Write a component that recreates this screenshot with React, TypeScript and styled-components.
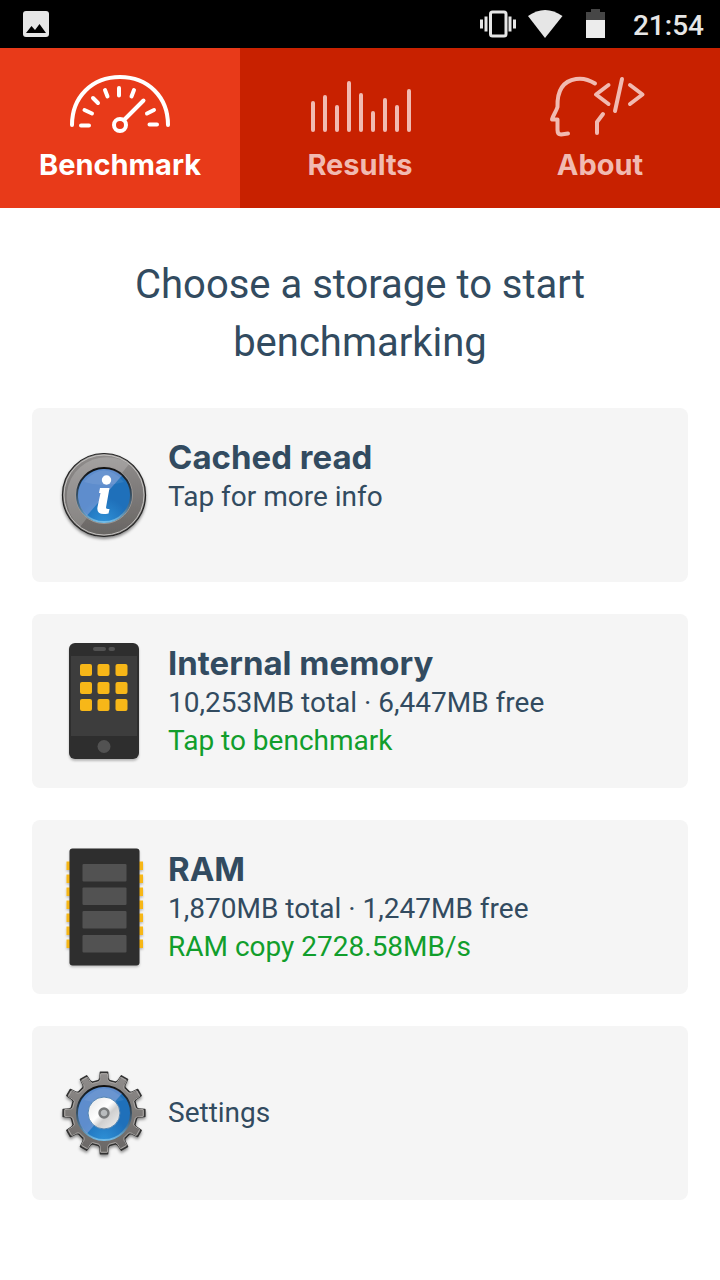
import React from "react";
import styled, { createGlobalStyle } from "styled-components";

const GlobalStyle = createGlobalStyle`
  * { box-sizing: border-box; }
  body { margin: 0; background: #fff; font-family: Roboto, "Liberation Sans", sans-serif; }
  svg { display: block; flex: none; }
`;

const Page = styled.div`
  min-height: 100vh;
  background: #fff;
  color: #324b60;
`;

const StatusBar = styled.header`
  display: flex;
  align-items: center;
  justify-content: space-between;
  height: 48px;
  padding: 0 16px 0 20px;
  background: #000;
  color: #e6e6e6;
`;

const StatusItems = styled.div`
  display: flex;
  align-items: center;
`;

const Clock = styled.time`
  margin-left: 24px;
  padding-top: 3px;
  font-size: 28px;
  line-height: 32px;
  font-weight: 500;
`;

const Tabs = styled.nav`
  display: grid;
  grid-template-columns: repeat(3, 1fr);
  background: #c82100;
`;

const Tab = styled.button<{ $active?: boolean }>`
  display: flex;
  flex-direction: column;
  align-items: center;
  height: 160px;
  padding: 24px 0 0;
  border: 0;
  background: ${(p) => (p.$active ? "#e83a19" : "#c82100")};
  color: ${(p) => (p.$active ? "#fff" : "#f1bab1")};
  font: 700 29px/36px Inter, "Open Sans", sans-serif;
  cursor: pointer;
`;

const TabIcon = styled.svg`
  width: 104px;
  height: 68px;
  margin-bottom: 7px;
  fill: none;
  stroke: currentColor;
  stroke-width: 4;
  stroke-linecap: round;
  stroke-linejoin: round;
`;

const Main = styled.main`
  padding: 48px 32px 80px;
`;

const Prompt = styled.h1`
  max-width: 520px;
  margin: 0 auto 36px;
  font-size: 40px;
  line-height: 58px;
  font-weight: 400;
  text-align: center;
`;

const CardList = styled.div`
  display: flex;
  flex-direction: column;
  gap: 32px;
`;

const Card = styled.button`
  display: flex;
  align-items: center;
  gap: 8px;
  width: 100%;
  min-height: 174px;
  padding: 16px;
  border: 0;
  border-radius: 8px;
  background: #f5f5f5;
  color: inherit;
  font: 400 28px/38px Roboto, "Liberation Sans", sans-serif;
  text-align: left;
  cursor: pointer;
`;

const CardIcon = styled.svg`
  width: 112px;
  height: 128px;
`;

const CardText = styled.span<{ $center?: boolean }>`
  display: flex;
  flex-direction: column;
  justify-content: ${(p) => (p.$center ? "center" : "flex-start")};
  min-height: 118px;
`;

const CardTitle = styled.span`
  font: 700 33px/42px Inter, "Open Sans", sans-serif;
`;

const Action = styled.span`
  color: #119e2c;
`;

const GaugeIcon = () => (
  <TabIcon viewBox="68 72 104 68" aria-hidden="true">
    <path d="M72 125C72 97 92 77 120 77S168 97 168 125" />
    <path d="M81 125.500H89M84.500 110 92 113.500M93 98 98 103M105 90 107.500 96.500M119 88V95.500M134 90 131.500 96.500M154 110 147 113.500M149.500 124.500H157M124 120 143.500 100.500" />
    <circle cx="120" cy="125" r="6" />
  </TabIcon>
);

const BarsIcon = () => (
  <TabIcon viewBox="308 72 104 68" aria-hidden="true">
    <path d="M313 103V130M325 97V130M337 107V130M349 83V130M361 95V130M373 113V130M385 100V130M397 107V130M409 91V130" />
  </TabIcon>
);

const HeadIcon = () => (
  <TabIcon viewBox="548 72 104 68" aria-hidden="true">
    <path d="M595 83.500C588 79 582 78 576 79C563 81 557 91 557.500 107C556 112 553 115 552 119.500H557.500V130Q557.500 134.500 561 134.500L568 133.500" />
    <path d="M608.500 85 596 94.500 608.500 104M622 79 615 111M630 85 642.500 94.500 630 104M603 114 597 122V133" />
  </TabIcon>
);

const PictureIcon = () => (
  <svg width="32" height="32" viewBox="20 8 32 32" aria-hidden="true">
    <rect x="23" y="11" width="26" height="26" rx="3" fill="#e6e6e6" />
    <path d="M26 33 31.500 26 35 30 39.500 24 46 33Z" fill="#000" />
  </svg>
);

const SystemIcons = () => (
  <svg width="130" height="32" viewBox="479 8 130 32" aria-hidden="true">
    <rect x="490.500" y="12" width="15.500" height="24" rx="2" fill="none" stroke="#e6e6e6" strokeWidth="3" />
    <path d="M480 19.500h3v9h-3zM484.500 16.500h3v15h-3zM508.500 16.500h3v15h-3zM513 19.500h3v9h-3z" fill="#e6e6e6" />
    <path d="M528 16Q545 4 562.500 16L545 38Z" fill="#e6e6e6" />
    <path d="M586 12h5V9h9v3h5v8h-19z" fill="#464646" />
    <path d="M586 20h19v18h-19z" fill="#ececec" />
  </svg>
);

const Gradients = ({ id }: { id: string }) => (
  <defs>
    <linearGradient id={`${id}-metal`} x1="0" y1="0" x2="0" y2="1">
      <stop offset="0" stopColor="#918e8d" />
      <stop offset="1" stopColor="#686563" />
    </linearGradient>
    <linearGradient id={`${id}-rim`} x1="0" y1="0" x2="0" y2="1">
      <stop offset="0" stopColor="#101010" />
      <stop offset=".3" stopColor="#24303c" />
      <stop offset=".75" stopColor="#4d7898" />
      <stop offset="1" stopColor="#71bdea" />
    </linearGradient>
    <radialGradient id={`${id}-blue`} cx=".5" cy="1" r=".45">
      <stop offset="0" stopColor="#2e90d6" />
      <stop offset="1" stopColor="#1f70ba" />
    </radialGradient>
    <filter id={`${id}-shadow`} x="-20%" y="-20%" width="140%" height="150%">
      <feDropShadow dx="0" dy="2" stdDeviation="1.600" floodColor="#000" floodOpacity=".45" />
    </filter>
  </defs>
);

const BlueLens = ({ id }: { id: string }) => (
  <>
    <circle r="27" fill={`url(#${id}-blue)`} stroke={`url(#${id}-rim)`} strokeWidth="2" />
    <path d="M18-19.500A26.500 26.500 0 0 0-17 20.500Z" fill="#b5b5e8" fillOpacity=".42" />
    <path d="M-20-13Q0-36 20-13Q0-7-20-13Z" fill="#fff" fillOpacity=".08" />
  </>
);

const InfoIcon = () => (
  <CardIcon viewBox="-56 -64 112 128" aria-hidden="true">
    <Gradients id="info" />
    <circle r="41.500" fill="url(#info-metal)" stroke="#242424" strokeWidth="1.200" filter="url(#info-shadow)" />
    <circle r="40" fill="none" stroke="#c4c2c0" strokeWidth="1" />
    <path d="M25-31A40 40 0 0 0-24 32Z" fill="#fff" fillOpacity=".18" />
    <circle r="28.500" fill="none" stroke="#9b9896" strokeWidth="1" />
    <BlueLens id="info" />
    <circle cx="2.500" cy="-15" r="4.700" fill="#fff" />
    <path d="M-4-7H5.500L2 12.500Q2 14.500 5.500 14L4.500 18.500Q-8 21-6.500 12L-3.500-2H-5Z" fill="#fff" />
  </CardIcon>
);

const PhoneIcon = () => (
  <CardIcon viewBox="48 637 112 128" aria-hidden="true">
    <defs>
      <filter id="phone-shadow" x="-10%" y="-10%" width="120%" height="120%">
        <feDropShadow dx="0" dy="2" stdDeviation="1" floodOpacity=".25" />
      </filter>
    </defs>
    <rect x="69" y="643" width="70" height="116" rx="6" fill="#2f2f2f" filter="url(#phone-shadow)" />
    <path d="M71 656h66v80H71z" fill="#3d3d3d" />
    <rect x="93" y="647" width="13" height="4" rx="2" fill="#525252" />
    <rect x="108.500" y="647" width="6.500" height="4" rx="2" fill="#525252" />
    {[664, 682, 699].map((y) =>
      [80, 97.5, 115.5].map((x) => (
        <rect key={`${x}-${y}`} x={x} y={y} width="12" height="12" rx="2" fill="#f7b718" />
      ))
    )}
    <circle cx="104" cy="746.500" r="6.500" fill="#525252" />
  </CardIcon>
);

const ChipIcon = () => (
  <CardIcon viewBox="48 843 112 128" aria-hidden="true">
    <defs>
      <filter id="chip-shadow" x="-10%" y="-10%" width="120%" height="120%">
        <feDropShadow dx="0" dy="1.500" stdDeviation="1" floodOpacity=".25" />
      </filter>
    </defs>
    <g filter="url(#chip-shadow)">
      {[0, 1, 2, 3, 4, 5, 6].map((i) => (
        <rect key={i} x="66.500" y={861.5 + i * 13} width="76.500" height="8.500" fill="#f7b718" />
      ))}
      <rect x="69.500" y="848.500" width="70" height="117" rx="3" fill="#2f2f2f" />
    </g>
    {[864, 887.5, 911, 935].map((y) => (
      <rect key={y} x="82.500" y={y} width="44" height="17.500" rx="1" fill="#525252" />
    ))}
  </CardIcon>
);

const gearOutline = Array.from({ length: 12 }, (_, i) => {
  const corners: [number, number][] = [[-9, 33], [-6.5, 35], [-5, 41], [5, 41], [6.5, 35], [9, 33]];
  return corners
    .map(([deg, radius]) => {
      const angle = ((i * 30 + deg - 90) * Math.PI) / 180;
      return `${(radius * Math.cos(angle)).toFixed(2)},${(radius * Math.sin(angle)).toFixed(2)}`;
    })
    .join(" ");
}).join(" ");

const GearIcon = () => (
  <CardIcon viewBox="-56 -64 112 128" aria-hidden="true">
    <Gradients id="gear" />
    <defs>
      <linearGradient id="gear-hub" x1="0" y1="0" x2="1" y2="1">
        <stop offset="0" stopColor="#e4e4e4" />
        <stop offset=".45" stopColor="#fff" />
        <stop offset=".6" stopColor="#cfcfcf" />
        <stop offset="1" stopColor="#f2f2f2" />
      </linearGradient>
    </defs>
    <polygon points={gearOutline} fill="url(#gear-metal)" stroke="#303030" strokeWidth="1.500" strokeLinejoin="round" filter="url(#gear-shadow)" />
    <polygon points={gearOutline} fill="none" stroke="#aaa7a5" strokeWidth="1" transform="scale(.96)" />
    <BlueLens id="gear" />
    <circle r="16" fill="url(#gear-hub)" stroke="#5486b4" strokeWidth="1" />
    <circle r="4.500" fill="#b9bcbe" stroke="#77797a" strokeWidth="2.400" />
  </CardIcon>
);

export default function App() {
  return (
    <Page>
      <GlobalStyle />
      <StatusBar>
        <PictureIcon />
        <StatusItems>
          <SystemIcons />
          <Clock>21:54</Clock>
        </StatusItems>
      </StatusBar>
      <Tabs aria-label="Sections">
        <Tab type="button" $active aria-current="page"><GaugeIcon />Benchmark</Tab>
        <Tab type="button"><BarsIcon />Results</Tab>
        <Tab type="button"><HeadIcon />About</Tab>
      </Tabs>
      <Main>
        <Prompt>Choose a storage to start benchmarking</Prompt>
        <CardList>
          <Card type="button">
            <InfoIcon />
            <CardText>
              <CardTitle>Cached read</CardTitle>
              <span>Tap for more info</span>
            </CardText>
          </Card>
          <Card type="button">
            <PhoneIcon />
            <CardText>
              <CardTitle>Internal memory</CardTitle>
              <span>10,253MB total · 6,447MB free</span>
              <Action>Tap to benchmark</Action>
            </CardText>
          </Card>
          <Card type="button">
            <ChipIcon />
            <CardText>
              <CardTitle>RAM</CardTitle>
              <span>1,870MB total · 1,247MB free</span>
              <Action>RAM copy 2728.58MB/s</Action>
            </CardText>
          </Card>
          <Card type="button">
            <GearIcon />
            <CardText $center>Settings</CardText>
          </Card>
        </CardList>
      </Main>
    </Page>
  );
}
